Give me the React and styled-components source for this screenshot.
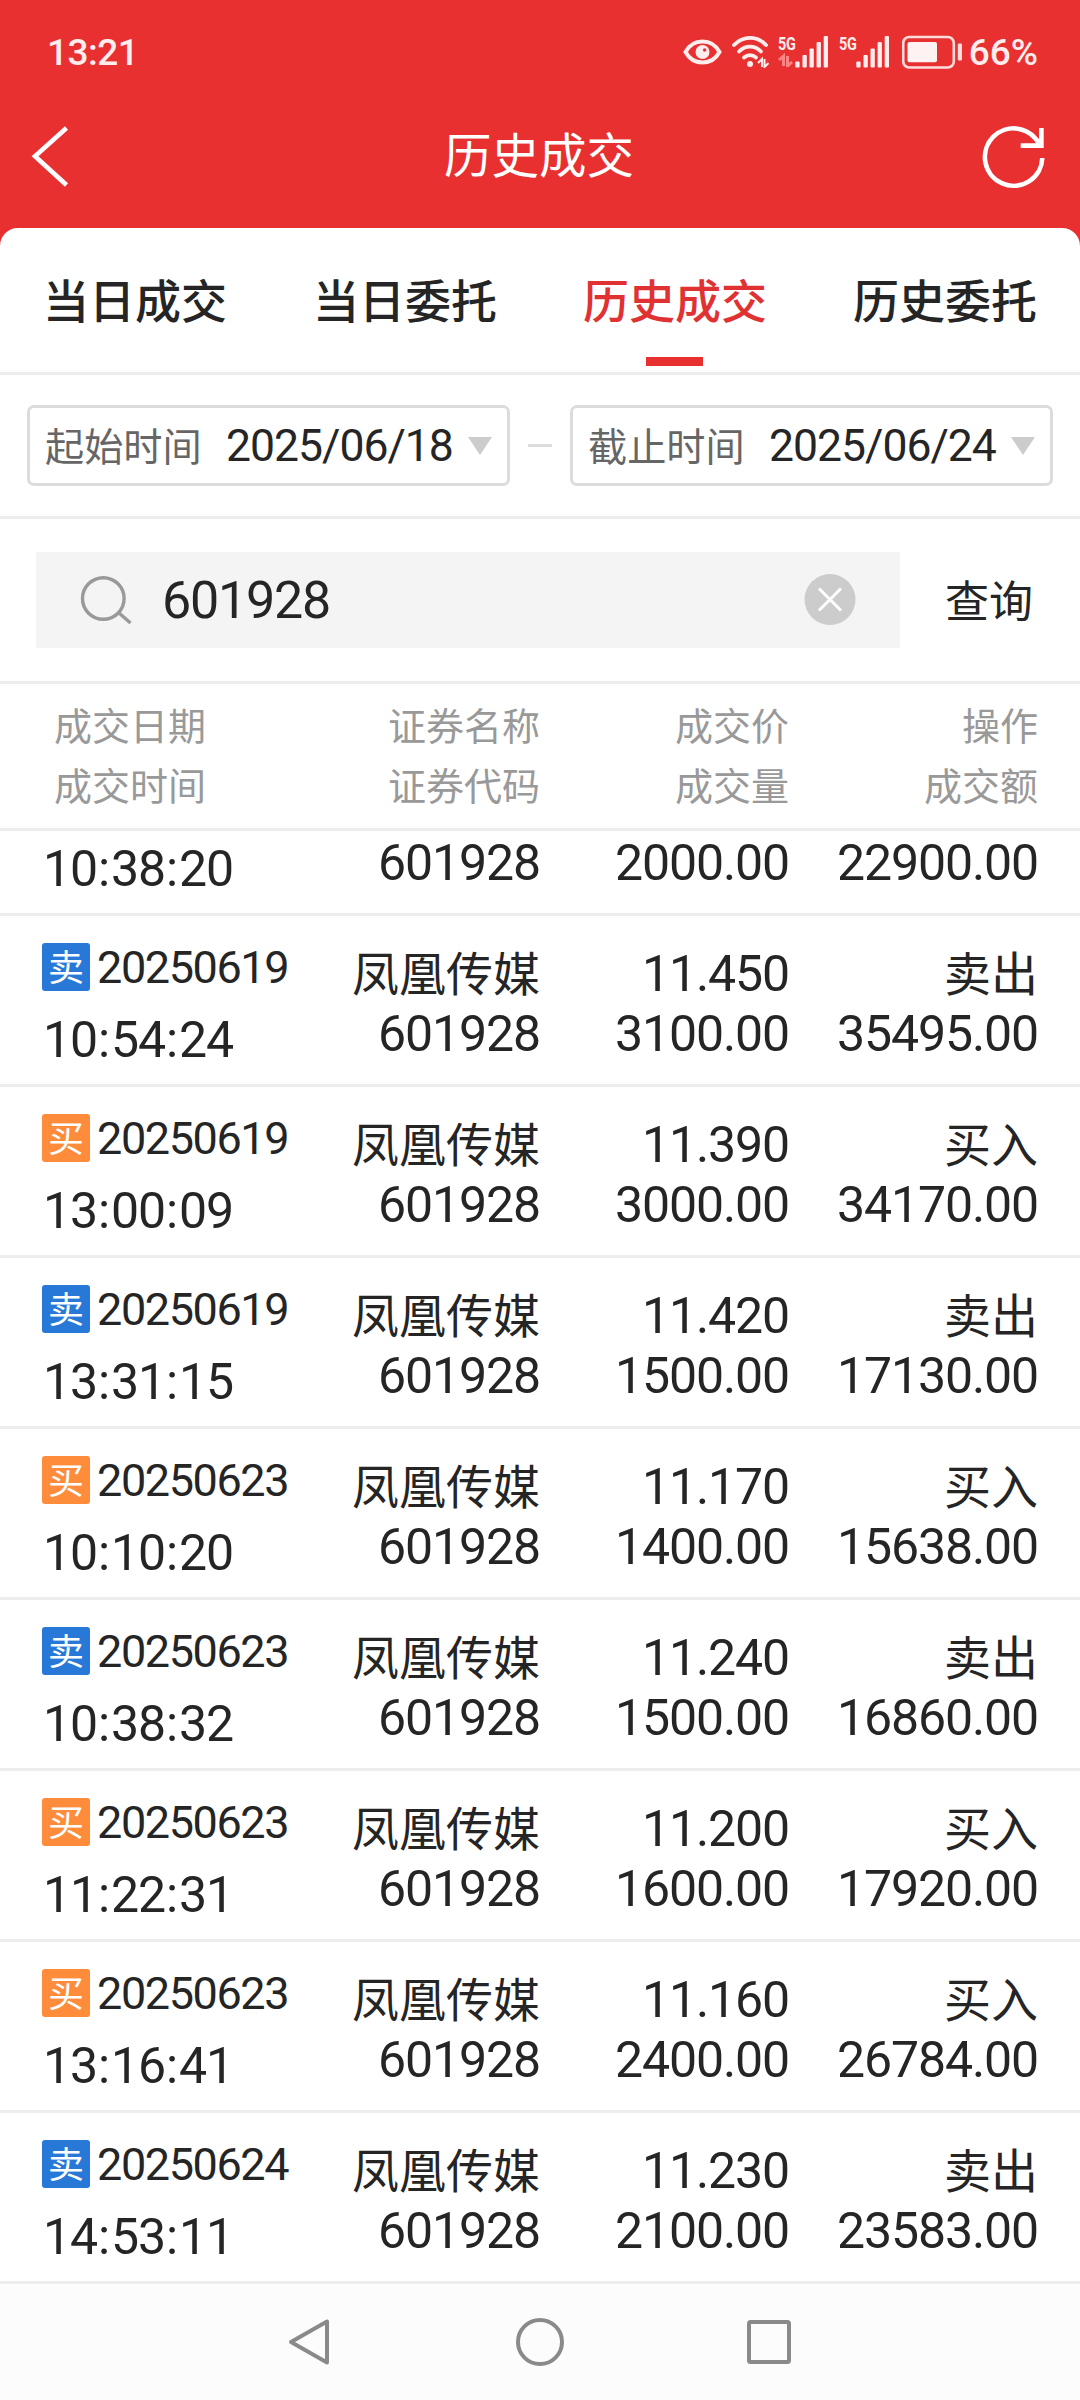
import React from "react";
import styled, { createGlobalStyle } from "styled-components";

const GlobalStyle = createGlobalStyle`
  * { box-sizing: border-box; }
  body { margin: 0; background: #e83030; }
`;

const latin = `Roboto, "Noto Sans CJK SC", sans-serif`;
const hans = `"Noto Sans CJK SC", Roboto, sans-serif`;

const Screen = styled.div`
  width: 1080px;
  height: 2400px;
  display: flex;
  flex-direction: column;
  overflow: hidden;
  background: #e83030;
  color: #252525;
  font-family: ${latin};
  white-space: nowrap;
`;

const StatusBar = styled.header`
  height: 104px;
  flex: none;
  display: flex;
  align-items: center;
  justify-content: space-between;
  padding: 0 42px 0 47px;
  color: #ffecec;
`;

const StatusText = styled.span`
  padding-top: 2px;
  font-size: 37px;
  line-height: 44px;
  font-weight: 500;
  letter-spacing: ${(p) => p.$spacing || "0"};
`;

const StatusRight = styled.div`
  display: flex;
  align-items: center;

  svg { margin-right: 9px; }
  svg:last-of-type { margin: 0 6px 0 3px; }
`;

const TitleBar = styled.div`
  height: 124px;
  flex: none;
  display: grid;
  grid-template-columns: 200px 1fr 200px;
  align-items: start;
`;

const BackButton = styled.button`
  display: flex;
  padding: 20px 0 0 30px;
  border: 0;
  background: none;
`;

const RefreshButton = styled(BackButton)`
  justify-content: flex-end;
  padding: 20px 32px 0 0;
`;

const Title = styled.h1`
  margin: 13px 0 0;
  padding-right: 2px;
  text-align: center;
  color: #fff;
  font: 400 47.5px/72px ${hans};
`;

const Sheet = styled.main`
  flex: 1;
  display: flex;
  flex-direction: column;
  background: #fff;
  border-radius: 18px 18px 0 0;
  overflow: hidden;
`;

const Tabs = styled.nav`
  height: 147px;
  flex: none;
  display: grid;
  grid-template-columns: repeat(4, 1fr);
  border-bottom: 3px solid #ededed;
`;

const Tab = styled.div`
  display: flex;
  flex-direction: column;
  align-items: center;
  justify-content: space-between;
  padding: 36px 0 6px;
  font: 500 46px/68px ${hans};
  color: ${(p) => (p.$active ? "#e03232" : "#252525")};
`;

const TabMark = styled.div`
  width: 57px;
  height: 9px;
  margin-right: 1px;
  background: #e83030;
`;

const DateRange = styled.section`
  height: 144px;
  flex: none;
  display: flex;
  align-items: center;
  justify-content: space-between;
  padding: 0 27px;
  border-bottom: 3px solid #ededed;
`;

const DateField = styled.div`
  width: 483px;
  height: 81px;
  display: flex;
  align-items: center;
  padding: 0 15px;
  border: 3px solid #dcdcdc;
  border-radius: 7px;
`;

const DateLabel = styled.span`
  width: 181px;
  padding-bottom: 4px;
  color: #666;
  font: 400 39.2px/60px ${hans};
`;

const DateValue = styled.span`
  width: 242px;
  padding-top: 1px;
  font-size: 44.5px;
  line-height: 60px;
  letter-spacing: -1px;
`;

const Caret = styled.i`
  border: 12px solid transparent;
  border-top: 18px solid #ccc;
  border-bottom: 0;
`;

const Dash = styled.div`
  width: 24px;
  height: 3px;
  background: #ddd;
`;

const SearchArea = styled.section`
  height: 165px;
  flex: none;
  display: flex;
  align-items: center;
  padding: 0 36px;
  border-bottom: 3px solid #ededed;
`;

const SearchBox = styled.div`
  width: 864px;
  height: 96px;
  display: flex;
  align-items: center;
  padding: 0 44px;
  background: #f4f4f4;
`;

const SearchValue = styled.span`
  flex: 1;
  margin-left: 28px;
  padding-top: 2px;
  font-size: 52px;
  line-height: 60px;
  letter-spacing: -1.2px;
`;

const QueryButton = styled.span`
  margin-left: 45px;
  padding-bottom: 2px;
  font: 400 44px/66px ${hans};
`;

const columns = `
  display: grid;
  grid-template-columns: 258px 240px 249px 249px;
  padding-left: 42px;
`;

const TableHead = styled.div`
  height: 147px;
  flex: none;
  ${columns}
  align-content: start;
  padding-top: 10px;
  border-bottom: 3px solid #ededed;
  color: #999;
  font: 400 38px/60px ${hans};
`;

const HeadCell = styled.span`
  text-align: ${(p) => (p.$first ? "left" : "right")};
  padding-left: ${(p) => (p.$first ? "12px" : "0")};
`;

const Row = styled.div`
  height: ${(p) => (p.$cut ? "85px" : "171px")};
  flex: none;
  ${columns}
  border-bottom: 3px solid #ededed;
`;

const DateCell = styled.div`
  display: flex;
  flex-direction: column;
  padding-top: ${(p) => (p.$cut ? "8px" : "27px")};
`;

const DateLine = styled.div`
  height: 48px;
  display: flex;
  align-items: center;
  gap: 7px;
  margin-bottom: 19px;
`;

const Badge = styled.b`
  width: 48px;
  height: 48px;
  border-radius: 3px;
  text-align: center;
  color: #fff;
  background: ${(p) => (p.$buy ? "#ff8c3b" : "#2878d7")};
  font: 400 36px/44px ${hans};
`;

const TradeDate = styled.span`
  padding-top: 2px;
  font-size: 45px;
  line-height: 48px;
  letter-spacing: -1.4px;
`;

const TradeTime = styled.span`
  padding-left: 1px;
  font-size: 50px;
  line-height: 60px;
  letter-spacing: -1.1px;
`;

const Colon = styled.span`
  padding: 0 2px 0 1px;
`;

const Cell = styled.div`
  display: flex;
  flex-direction: column;
  align-items: flex-end;
  padding-top: ${(p) => (p.$cut ? "2px" : "28px")};
  font-size: 50px;
  line-height: 60px;
  letter-spacing: -1.1px;
`;

const Name = styled.span`
  height: 60px;
  font: 400 47px/54px ${hans};
  letter-spacing: 0;
`;

const NavBar = styled.footer`
  height: 116px;
  flex: none;
  display: flex;
  align-items: center;
  justify-content: space-between;
  padding: 0 286px;
  background: #fcfcfc;
`;

const EyeIcon = () => (
  <svg width="39" height="28" viewBox="0 0 39 28" fill="none">
    <path d="M2.5 14C6 7.500 12 3.500 19.500 3.500S33 7.500 36.500 14C33 20.500 27 24.500 19.500 24.500S6 20.500 2.500 14Z" stroke="#ffecec" strokeWidth="4" />
    <circle cx="19.500" cy="14" r="7" fill="#ffecec" />
    <circle cx="21.600" cy="12" r="1.700" fill="#e83030" />
  </svg>
);

const WifiIcon = () => (
  <svg width="38" height="32" viewBox="0 0 38 32" fill="none">
    <g stroke="#ffecec" strokeWidth="3.800" strokeLinecap="round">
      <path d="M3 9C12-.5 26-.5 35 9" />
      <path d="M8 15.500C14.500 9 23.500 9 30 15.500" />
      <path d="M13 21.500C16.500 18.500 21.500 18.500 25 21.500" />
    </g>
    <circle cx="19" cy="28" r="3" fill="#ffecec" />
    <path d="M27 27l4-4v8M33.500 23v8l4-4" stroke="#ffecec" strokeWidth="2" />
  </svg>
);

const Signal = styled.div`
  display: flex;
  width: 51px;
  height: 34px;
  margin-right: ${(p) => p.$gap};

  svg, svg:last-of-type { margin: 0; }
`;

const Network = styled.div`
  width: 17px;
  color: #ffecec;
  font: 700 18.5px/18px "Roboto", sans-serif;
  letter-spacing: -0.5px;

  span {
    display: inline-block;
    transform: scaleX(0.78);
    transform-origin: left;
  }

  svg { display: block; }
`;

const SignalIcon = ({ data, gap }) => (
  <Signal $gap={gap}>
    <Network>
      <span>5G</span>
      {data && (
        <svg width="16" height="14" viewBox="0 0 16 14">
          <path d="M1 7l4.500-4v10M9.500 3v10l4.500-4" stroke="#ff8585" strokeWidth="3" fill="none" />
        </svg>
      )}
    </Network>
    <svg width="34" height="34" viewBox="17 0 34 34">
      <g fill="#ffecec">
        <rect x="17.300" y="26.500" width="4.300" height="6" rx="1" />
        <rect x="24.500" y="20" width="4.300" height="12.500" rx="1" />
        <rect x="31.500" y="13.500" width="4.300" height="19" rx="1" />
        <rect x="38.600" y="7" width="4.300" height="25.500" rx="1" />
        <rect x="45.700" y="1" width="4.300" height="31.500" rx="1" />
      </g>
    </svg>
  </Signal>
);

const BatteryIcon = () => (
  <svg width="61" height="34" viewBox="0 0 61 34">
    <rect x="1.200" y="2" width="50.600" height="30.500" rx="6" fill="none" stroke="#ffdcdc" strokeWidth="2.600" />
    <rect x="5.500" y="7" width="29.500" height="20.300" rx="2" fill="#fff2f2" />
    <rect x="55.800" y="8.500" width="4.200" height="17" rx="1.300" fill="#ffdcdc" />
  </svg>
);

const BackIcon = () => (
  <svg width="42" height="66" viewBox="0 0 42 66" fill="none">
    <path d="M36.500 4L5 32.300L36.500 61" stroke="#fff" strokeWidth="4.600" />
  </svg>
);

const RefreshIcon = () => (
  <svg width="66" height="66" viewBox="0 0 66 66" fill="none" stroke="#fff" strokeWidth="4.600">
    <path d="M60.300 34A28.700 28.700 0 1 1 58 21.800" />
    <path d="M59.400 4V21.600H38.700" />
  </svg>
);

const SearchIcon = () => (
  <svg width="54" height="54" viewBox="0 0 54 54" fill="none" stroke="#999" strokeWidth="3.400">
    <circle cx="23.300" cy="25.500" r="20.800" />
    <path d="M38.500 39.500L50.500 50" />
  </svg>
);

const ClearIcon = () => (
  <svg width="52" height="52" viewBox="0 0 52 52">
    <circle cx="26" cy="25.500" r="25.500" fill="#ccc" />
    <path d="M15 14.500l22 22M37 14.500l-22 22" stroke="#fff" strokeWidth="3" />
  </svg>
);

const NavIcon = ({ children }) => (
  <svg width="50" height="50" viewBox="0 0 50 50" fill="none" stroke="#8a8a8a" strokeWidth="4" strokeLinejoin="round">
    {children}
  </svg>
);

const trades = [
  [false, "20250619", "10:54:24", "11.450", "3100.00", "35495.00"],
  [true, "20250619", "13:00:09", "11.390", "3000.00", "34170.00"],
  [false, "20250619", "13:31:15", "11.420", "1500.00", "17130.00"],
  [true, "20250623", "10:10:20", "11.170", "1400.00", "15638.00"],
  [false, "20250623", "10:38:32", "11.240", "1500.00", "16860.00"],
  [true, "20250623", "11:22:31", "11.200", "1600.00", "17920.00"],
  [true, "20250623", "13:16:41", "11.160", "2400.00", "26784.00"],
  [false, "20250624", "14:53:11", "11.230", "2100.00", "23583.00"],
];

const Time = ({ value }) => {
  const [h, m, s] = value.split(":");
  return (
    <TradeTime>
      {h}<Colon>:</Colon>{m}<Colon>:</Colon>{s}
    </TradeTime>
  );
};

const TradeRow = ({ trade: [buy, date, time, price, volume, amount] }) => (
  <Row>
    <DateCell>
      <DateLine>
        <Badge $buy={buy}>{buy ? "买" : "卖"}</Badge>
        <TradeDate>{date}</TradeDate>
      </DateLine>
      <Time value={time} />
    </DateCell>
    <Cell>
      <Name>凤凰传媒</Name>
      <span>601928</span>
    </Cell>
    <Cell>
      <span>{price}</span>
      <span>{volume}</span>
    </Cell>
    <Cell>
      <Name>{buy ? "买入" : "卖出"}</Name>
      <span>{amount}</span>
    </Cell>
  </Row>
);

export default function App() {
  return (
    <Screen>
      <GlobalStyle />
      <StatusBar>
        <StatusText $spacing="-0.5px">13:21</StatusText>
        <StatusRight>
          <EyeIcon />
          <WifiIcon />
          <SignalIcon data gap="10px" />
          <SignalIcon gap="9px" />
          <BatteryIcon />
          <StatusText>66%</StatusText>
        </StatusRight>
      </StatusBar>
      <TitleBar>
        <BackButton><BackIcon /></BackButton>
        <Title>历史成交</Title>
        <RefreshButton><RefreshIcon /></RefreshButton>
      </TitleBar>
      <Sheet>
        <Tabs>
          {["当日成交", "当日委托", "历史成交", "历史委托"].map((name, i) => (
            <Tab key={name} $active={i === 2}>
              {name}
              {i === 2 && <TabMark />}
            </Tab>
          ))}
        </Tabs>
        <DateRange>
          <DateField>
            <DateLabel>起始时间</DateLabel>
            <DateValue>2025/06/18</DateValue>
            <Caret />
          </DateField>
          <Dash />
          <DateField>
            <DateLabel>截止时间</DateLabel>
            <DateValue>2025/06/24</DateValue>
            <Caret />
          </DateField>
        </DateRange>
        <SearchArea>
          <SearchBox>
            <SearchIcon />
            <SearchValue>601928</SearchValue>
            <ClearIcon />
          </SearchBox>
          <QueryButton>查询</QueryButton>
        </SearchArea>
        <TableHead>
          <HeadCell $first>成交日期</HeadCell>
          <HeadCell>证券名称</HeadCell>
          <HeadCell>成交价</HeadCell>
          <HeadCell>操作</HeadCell>
          <HeadCell $first>成交时间</HeadCell>
          <HeadCell>证券代码</HeadCell>
          <HeadCell>成交量</HeadCell>
          <HeadCell>成交额</HeadCell>
        </TableHead>
        <Row $cut>
          <DateCell $cut><Time value="10:38:20" /></DateCell>
          <Cell $cut><span>601928</span></Cell>
          <Cell $cut><span>2000.00</span></Cell>
          <Cell $cut><span>22900.00</span></Cell>
        </Row>
        {trades.map((trade) => (
          <TradeRow key={trade[1] + trade[2]} trade={trade} />
        ))}
      </Sheet>
      <NavBar>
        <NavIcon><path d="M41 4.500V45.500L5 25Z" /></NavIcon>
        <NavIcon><circle cx="25" cy="25" r="22" /></NavIcon>
        <NavIcon><rect x="5" y="5" width="40" height="40" rx="1.500" /></NavIcon>
      </NavBar>
    </Screen>
  );
}
